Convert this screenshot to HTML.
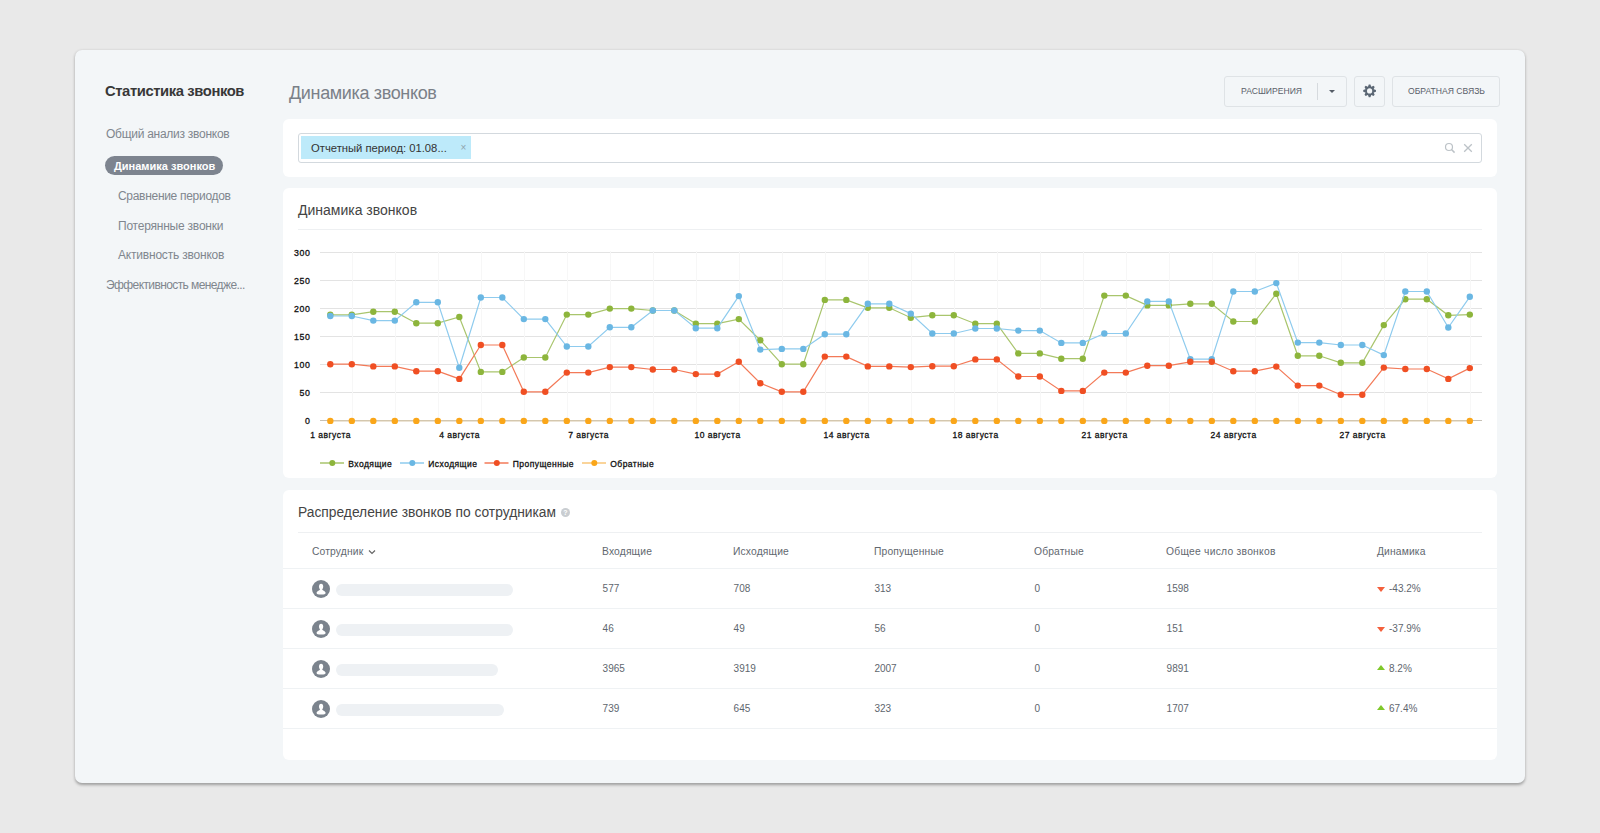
<!DOCTYPE html>
<html><head><meta charset="utf-8">
<style>
*{box-sizing:border-box;margin:0;padding:0}
html,body{width:1600px;height:833px;overflow:hidden;background:#e9e9e9;font-family:"Liberation Sans",sans-serif;color:#333}
.abs{position:absolute}
.win{position:absolute;left:75px;top:50px;width:1450px;height:733px;background:#f3f6f8;border-radius:7px;box-shadow:0 1.5px 3px rgba(0,0,0,.32)}
.t{position:absolute;white-space:nowrap;line-height:1}
.card{position:absolute;background:#fff;border-radius:6px}
.btn{position:absolute;border:1px solid #dfe3e6;border-radius:3px;top:76px;height:31px}
.bt{position:absolute;font-size:8.6px;color:#5a6069;white-space:nowrap;line-height:1}
svg text.ax{font-family:"Liberation Sans",sans-serif;font-size:8.5px;letter-spacing:0.5px;fill:#111;stroke:#111;stroke-width:0.3px}
svg text.ay{font-family:"Liberation Sans",sans-serif;font-size:8.8px;letter-spacing:0.6px;fill:#111;stroke:#111;stroke-width:0.3px}
svg text.lg{font-family:"Liberation Sans",sans-serif;font-size:8.5px;letter-spacing:0.45px;fill:#111;stroke:#111;stroke-width:0.3px}
.th{position:absolute;top:546.8px;font-size:10.3px;letter-spacing:0.15px;color:#62686f;white-space:nowrap;line-height:1}
.td{position:absolute;font-size:10px;color:#60666e;white-space:nowrap;line-height:1}
.rb{position:absolute;left:283px;width:1214px;height:1px;background:#eff2f4}
.av{position:absolute;left:312.4px;width:18px;height:18px;border-radius:50%;background:#7b838d;overflow:hidden}
.nb{position:absolute;left:336px;height:12px;border-radius:6px;background:#eef1f4}
</style></head><body>
<div class="win"></div>

<!-- sidebar -->
<div class="t" style="left:105px;top:83.9px;font-size:14.8px;letter-spacing:-0.41px;font-weight:bold;color:#383838">Статистика звонков</div>
<div class="t" style="left:106px;top:127.5px;font-size:12px;letter-spacing:-0.27px;color:#80868e">Общий анализ звонков</div>
<div class="abs" style="left:105px;top:156px;width:118px;height:19px;border-radius:10px;background:#7d848f"></div>
<div class="t" style="left:114px;top:161.2px;font-size:11px;font-weight:bold;color:#fff">Динамика звонков</div>
<div class="t" style="left:118px;top:189.9px;font-size:12px;letter-spacing:-0.3px;color:#80868e">Сравнение периодов</div>
<div class="t" style="left:118px;top:219.9px;font-size:12px;letter-spacing:-0.22px;color:#80868e">Потерянные звонки</div>
<div class="t" style="left:118px;top:248.6px;font-size:12px;letter-spacing:-0.2px;color:#80868e">Активность звонков</div>
<div class="t" style="left:106px;top:278.6px;font-size:12px;letter-spacing:-0.6px;color:#80868e">Эффективность менедже...</div>

<!-- page title -->
<div class="t" style="left:289px;top:83.5px;font-size:18px;letter-spacing:-0.35px;color:#7a8088">Динамика звонков</div>

<!-- buttons -->
<div class="btn" style="left:1224px;width:123px"></div>
<div class="abs" style="left:1317px;top:83px;width:1px;height:17px;background:#d6dade"></div>
<div class="bt" style="left:1241px;top:87px">РАСШИРЕНИЯ</div>
<div class="abs" style="left:1329px;top:90px;width:0;height:0;border-left:3px solid transparent;border-right:3px solid transparent;border-top:3px solid #555c66"></div>
<div class="btn" style="left:1354px;width:31px"></div>
<svg class="abs" style="left:1363px;top:84px" width="14" height="14" viewBox="0 0 14 14"><path d="M4.97,2.70 L5.77,0.55 L7.43,0.55 L8.23,2.70 L8.27,2.72 L8.32,2.74 L8.37,2.76 L8.42,2.78 L10.50,1.83 L11.67,3.00 L10.72,5.08 L10.74,5.13 L10.76,5.18 L10.78,5.23 L10.80,5.27 L12.95,6.07 L12.95,7.73 L10.80,8.53 L10.78,8.57 L10.76,8.62 L10.74,8.67 L10.72,8.72 L11.67,10.80 L10.50,11.97 L8.42,11.02 L8.37,11.04 L8.32,11.06 L8.27,11.08 L8.23,11.10 L7.43,13.25 L5.77,13.25 L4.97,11.10 L4.93,11.08 L4.88,11.06 L4.83,11.04 L4.78,11.02 L2.70,11.97 L1.53,10.80 L2.48,8.72 L2.46,8.67 L2.44,8.62 L2.42,8.57 L2.40,8.53 L0.25,7.73 L0.25,6.07 L2.40,5.27 L2.42,5.23 L2.44,5.18 L2.46,5.13 L2.48,5.08 L1.53,3.00 L2.70,1.83 L4.78,2.78 L4.83,2.76 L4.88,2.74 L4.93,2.72Z M9.2,6.9 A2.6,2.6 0 1,0 3.9999999999999996,6.9 A2.6,2.6 0 1,0 9.2,6.9Z" fill="#5b6774" fill-rule="evenodd"/></svg>
<div class="btn" style="left:1392px;width:108px"></div>
<div class="bt" style="left:1408px;top:87px">ОБРАТНАЯ СВЯЗЬ</div>

<!-- filter card -->
<div class="card" style="left:283px;top:119px;width:1214px;height:58px"></div>
<div class="abs" style="left:298px;top:133px;width:1184px;height:30px;border:1px solid #d3d9de;border-radius:3px;background:#fff"></div>
<div class="abs" style="left:301px;top:136px;width:170px;height:23px;background:#bdeafa"></div>
<div class="t" style="left:311px;top:142.5px;font-size:11.25px;color:#333">Отчетный период: 01.08...</div>
<div class="t" style="left:460.5px;top:143px;font-size:10px;color:#8fa4ad">×</div>
<svg class="abs" style="left:1444px;top:142px" width="12" height="12" viewBox="0 0 12 12"><circle cx="5" cy="5" r="3.5" fill="none" stroke="#bcc2c7" stroke-width="1.2"/><line x1="7.5" y1="7.5" x2="10.6" y2="10.6" stroke="#bcc2c7" stroke-width="1.5"/></svg>
<svg class="abs" style="left:1462.5px;top:143px" width="10" height="10" viewBox="0 0 10 10"><path d="M1.2 1.2L8.8 8.8M8.8 1.2L1.2 8.8" stroke="#bcc2c7" stroke-width="1.3"/></svg>

<!-- chart card -->
<div class="card" style="left:283px;top:188px;width:1214px;height:290px"></div>
<div class="t" style="left:298px;top:203.2px;font-size:14px;color:#444">Динамика звонков</div>
<div class="abs" style="left:298px;top:229px;width:1184px;height:1px;background:#eef0f2"></div>
<svg class="abs" style="left:0;top:0" width="1600" height="833">
<line x1="320" y1="420.5" x2="1482" y2="420.5" stroke="#c7c1b5" stroke-width="1"/>
<text x="310.5" y="424.0" text-anchor="end" class="ay">0</text>
<line x1="320" y1="392.5" x2="1482" y2="392.5" stroke="#e3e3e3" stroke-width="1"/>
<text x="310.5" y="396.0" text-anchor="end" class="ay">50</text>
<line x1="320" y1="364.5" x2="1482" y2="364.5" stroke="#e3e3e3" stroke-width="1"/>
<text x="310.5" y="368.0" text-anchor="end" class="ay">100</text>
<line x1="320" y1="336.5" x2="1482" y2="336.5" stroke="#e3e3e3" stroke-width="1"/>
<text x="310.5" y="340.0" text-anchor="end" class="ay">150</text>
<line x1="320" y1="308.5" x2="1482" y2="308.5" stroke="#e3e3e3" stroke-width="1"/>
<text x="310.5" y="312.0" text-anchor="end" class="ay">200</text>
<line x1="320" y1="280.5" x2="1482" y2="280.5" stroke="#e3e3e3" stroke-width="1"/>
<text x="310.5" y="284.0" text-anchor="end" class="ay">250</text>
<line x1="320" y1="252.5" x2="1482" y2="252.5" stroke="#e3e3e3" stroke-width="1"/>
<text x="310.5" y="256.0" text-anchor="end" class="ay">300</text>
<line x1="352.5" y1="251" x2="352.5" y2="420" stroke="#f7f7f7" stroke-width="1"/>
<line x1="395.5" y1="251" x2="395.5" y2="420" stroke="#f7f7f7" stroke-width="1"/>
<line x1="438.5" y1="251" x2="438.5" y2="420" stroke="#f7f7f7" stroke-width="1"/>
<line x1="481.5" y1="251" x2="481.5" y2="420" stroke="#f7f7f7" stroke-width="1"/>
<line x1="524.5" y1="251" x2="524.5" y2="420" stroke="#f7f7f7" stroke-width="1"/>
<line x1="567.5" y1="251" x2="567.5" y2="420" stroke="#f7f7f7" stroke-width="1"/>
<line x1="610.5" y1="251" x2="610.5" y2="420" stroke="#f7f7f7" stroke-width="1"/>
<line x1="653.5" y1="251" x2="653.5" y2="420" stroke="#f7f7f7" stroke-width="1"/>
<line x1="696.5" y1="251" x2="696.5" y2="420" stroke="#f7f7f7" stroke-width="1"/>
<line x1="739.5" y1="251" x2="739.5" y2="420" stroke="#f7f7f7" stroke-width="1"/>
<line x1="782.5" y1="251" x2="782.5" y2="420" stroke="#f7f7f7" stroke-width="1"/>
<line x1="825.5" y1="251" x2="825.5" y2="420" stroke="#f7f7f7" stroke-width="1"/>
<line x1="868.5" y1="251" x2="868.5" y2="420" stroke="#f7f7f7" stroke-width="1"/>
<line x1="911.5" y1="251" x2="911.5" y2="420" stroke="#f7f7f7" stroke-width="1"/>
<line x1="954.5" y1="251" x2="954.5" y2="420" stroke="#f7f7f7" stroke-width="1"/>
<line x1="997.5" y1="251" x2="997.5" y2="420" stroke="#f7f7f7" stroke-width="1"/>
<line x1="1040.5" y1="251" x2="1040.5" y2="420" stroke="#f7f7f7" stroke-width="1"/>
<line x1="1083.5" y1="251" x2="1083.5" y2="420" stroke="#f7f7f7" stroke-width="1"/>
<line x1="1126.5" y1="251" x2="1126.5" y2="420" stroke="#f7f7f7" stroke-width="1"/>
<line x1="1169.5" y1="251" x2="1169.5" y2="420" stroke="#f7f7f7" stroke-width="1"/>
<line x1="1212.5" y1="251" x2="1212.5" y2="420" stroke="#f7f7f7" stroke-width="1"/>
<line x1="1255.5" y1="251" x2="1255.5" y2="420" stroke="#f7f7f7" stroke-width="1"/>
<line x1="1298.5" y1="251" x2="1298.5" y2="420" stroke="#f7f7f7" stroke-width="1"/>
<line x1="1341.5" y1="251" x2="1341.5" y2="420" stroke="#f7f7f7" stroke-width="1"/>
<line x1="1384.5" y1="251" x2="1384.5" y2="420" stroke="#f7f7f7" stroke-width="1"/>
<line x1="1427.5" y1="251" x2="1427.5" y2="420" stroke="#f7f7f7" stroke-width="1"/>
<line x1="1470.5" y1="251" x2="1470.5" y2="420" stroke="#f7f7f7" stroke-width="1"/>
<text x="330.6" y="437.8" text-anchor="middle" class="ax">1 августа</text>
<text x="459.6" y="437.8" text-anchor="middle" class="ax">4 августа</text>
<text x="588.5999999999999" y="437.8" text-anchor="middle" class="ax">7 августа</text>
<text x="717.5999999999999" y="437.8" text-anchor="middle" class="ax">10 августа</text>
<text x="846.5999999999999" y="437.8" text-anchor="middle" class="ax">14 августа</text>
<text x="975.5999999999999" y="437.8" text-anchor="middle" class="ax">18 августа</text>
<text x="1104.6" y="437.8" text-anchor="middle" class="ax">21 августа</text>
<text x="1233.6" y="437.8" text-anchor="middle" class="ax">24 августа</text>
<text x="1362.6" y="437.8" text-anchor="middle" class="ax">27 августа</text>
<polyline points="330.3,314.8 351.8,314.8 373.3,311.7 394.8,311.7 416.3,323.2 437.8,323.2 459.3,317.0 480.8,371.9 502.3,371.9 523.8,357.5 545.3,357.5 566.8,314.6 588.3,314.6 609.8,308.6 631.3,308.6 652.8,310.5 674.3,310.5 695.8,323.7 717.3,323.7 738.8,319.1 760.3,340.2 781.8,364.2 803.3,364.2 824.8,299.9 846.3,299.9 867.8,307.8 889.3,307.8 910.8,317.7 932.3,315.3 953.8,315.3 975.3,323.7 996.8,323.7 1018.3,353.4 1039.8,353.4 1061.3,358.7 1082.8,358.7 1104.3,295.6 1125.8,295.6 1147.3,305.4 1168.8,305.4 1190.3,303.8 1211.8,303.8 1233.3,321.5 1254.8,321.5 1276.3,293.7 1297.8,355.8 1319.3,355.8 1340.8,362.8 1362.3,362.8 1383.8,325.1 1405.3,299.2 1426.8,299.2 1448.3,315.3 1469.8,314.6" fill="none" stroke="#a9c56d" stroke-width="1.2"/>
<circle cx="330.3" cy="314.8" r="3.2" fill="#8db53c"/>
<circle cx="351.8" cy="314.8" r="3.2" fill="#8db53c"/>
<circle cx="373.3" cy="311.7" r="3.2" fill="#8db53c"/>
<circle cx="394.8" cy="311.7" r="3.2" fill="#8db53c"/>
<circle cx="416.3" cy="323.2" r="3.2" fill="#8db53c"/>
<circle cx="437.8" cy="323.2" r="3.2" fill="#8db53c"/>
<circle cx="459.3" cy="317.0" r="3.2" fill="#8db53c"/>
<circle cx="480.8" cy="371.9" r="3.2" fill="#8db53c"/>
<circle cx="502.3" cy="371.9" r="3.2" fill="#8db53c"/>
<circle cx="523.8" cy="357.5" r="3.2" fill="#8db53c"/>
<circle cx="545.3" cy="357.5" r="3.2" fill="#8db53c"/>
<circle cx="566.8" cy="314.6" r="3.2" fill="#8db53c"/>
<circle cx="588.3" cy="314.6" r="3.2" fill="#8db53c"/>
<circle cx="609.8" cy="308.6" r="3.2" fill="#8db53c"/>
<circle cx="631.3" cy="308.6" r="3.2" fill="#8db53c"/>
<circle cx="652.8" cy="310.5" r="3.2" fill="#8db53c"/>
<circle cx="674.3" cy="310.5" r="3.2" fill="#8db53c"/>
<circle cx="695.8" cy="323.7" r="3.2" fill="#8db53c"/>
<circle cx="717.3" cy="323.7" r="3.2" fill="#8db53c"/>
<circle cx="738.8" cy="319.1" r="3.2" fill="#8db53c"/>
<circle cx="760.3" cy="340.2" r="3.2" fill="#8db53c"/>
<circle cx="781.8" cy="364.2" r="3.2" fill="#8db53c"/>
<circle cx="803.3" cy="364.2" r="3.2" fill="#8db53c"/>
<circle cx="824.8" cy="299.9" r="3.2" fill="#8db53c"/>
<circle cx="846.3" cy="299.9" r="3.2" fill="#8db53c"/>
<circle cx="867.8" cy="307.8" r="3.2" fill="#8db53c"/>
<circle cx="889.3" cy="307.8" r="3.2" fill="#8db53c"/>
<circle cx="910.8" cy="317.7" r="3.2" fill="#8db53c"/>
<circle cx="932.3" cy="315.3" r="3.2" fill="#8db53c"/>
<circle cx="953.8" cy="315.3" r="3.2" fill="#8db53c"/>
<circle cx="975.3" cy="323.7" r="3.2" fill="#8db53c"/>
<circle cx="996.8" cy="323.7" r="3.2" fill="#8db53c"/>
<circle cx="1018.3" cy="353.4" r="3.2" fill="#8db53c"/>
<circle cx="1039.8" cy="353.4" r="3.2" fill="#8db53c"/>
<circle cx="1061.3" cy="358.7" r="3.2" fill="#8db53c"/>
<circle cx="1082.8" cy="358.7" r="3.2" fill="#8db53c"/>
<circle cx="1104.3" cy="295.6" r="3.2" fill="#8db53c"/>
<circle cx="1125.8" cy="295.6" r="3.2" fill="#8db53c"/>
<circle cx="1147.3" cy="305.4" r="3.2" fill="#8db53c"/>
<circle cx="1168.8" cy="305.4" r="3.2" fill="#8db53c"/>
<circle cx="1190.3" cy="303.8" r="3.2" fill="#8db53c"/>
<circle cx="1211.8" cy="303.8" r="3.2" fill="#8db53c"/>
<circle cx="1233.3" cy="321.5" r="3.2" fill="#8db53c"/>
<circle cx="1254.8" cy="321.5" r="3.2" fill="#8db53c"/>
<circle cx="1276.3" cy="293.7" r="3.2" fill="#8db53c"/>
<circle cx="1297.8" cy="355.8" r="3.2" fill="#8db53c"/>
<circle cx="1319.3" cy="355.8" r="3.2" fill="#8db53c"/>
<circle cx="1340.8" cy="362.8" r="3.2" fill="#8db53c"/>
<circle cx="1362.3" cy="362.8" r="3.2" fill="#8db53c"/>
<circle cx="1383.8" cy="325.1" r="3.2" fill="#8db53c"/>
<circle cx="1405.3" cy="299.2" r="3.2" fill="#8db53c"/>
<circle cx="1426.8" cy="299.2" r="3.2" fill="#8db53c"/>
<circle cx="1448.3" cy="315.3" r="3.2" fill="#8db53c"/>
<circle cx="1469.8" cy="314.6" r="3.2" fill="#8db53c"/>
<polyline points="330.3,316.0 351.8,316.0 373.3,320.6 394.8,320.6 416.3,302.3 437.8,302.3 459.3,367.8 480.8,297.5 502.3,297.5 523.8,319.1 545.3,319.1 566.8,346.5 588.3,346.5 609.8,327.3 631.3,327.3 652.8,310.5 674.3,310.5 695.8,328.2 717.3,328.2 738.8,296.1 760.3,349.6 781.8,348.9 803.3,348.9 824.8,334.2 846.3,334.2 867.8,303.8 889.3,303.8 910.8,313.6 932.3,333.5 953.8,333.5 975.3,328.5 996.8,328.5 1018.3,330.6 1039.8,330.6 1061.3,342.9 1082.8,342.9 1104.3,333.5 1125.8,333.5 1147.3,301.4 1168.8,301.4 1190.3,359.2 1211.8,359.2 1233.3,291.5 1254.8,291.5 1276.3,283.1 1297.8,342.6 1319.3,342.6 1340.8,345.0 1362.3,345.0 1383.8,355.1 1405.3,291.5 1426.8,291.5 1448.3,327.5 1469.8,296.8" fill="none" stroke="#8ecbee" stroke-width="1.2"/>
<circle cx="330.3" cy="316.0" r="3.2" fill="#6ab7e3"/>
<circle cx="351.8" cy="316.0" r="3.2" fill="#6ab7e3"/>
<circle cx="373.3" cy="320.6" r="3.2" fill="#6ab7e3"/>
<circle cx="394.8" cy="320.6" r="3.2" fill="#6ab7e3"/>
<circle cx="416.3" cy="302.3" r="3.2" fill="#6ab7e3"/>
<circle cx="437.8" cy="302.3" r="3.2" fill="#6ab7e3"/>
<circle cx="459.3" cy="367.8" r="3.2" fill="#6ab7e3"/>
<circle cx="480.8" cy="297.5" r="3.2" fill="#6ab7e3"/>
<circle cx="502.3" cy="297.5" r="3.2" fill="#6ab7e3"/>
<circle cx="523.8" cy="319.1" r="3.2" fill="#6ab7e3"/>
<circle cx="545.3" cy="319.1" r="3.2" fill="#6ab7e3"/>
<circle cx="566.8" cy="346.5" r="3.2" fill="#6ab7e3"/>
<circle cx="588.3" cy="346.5" r="3.2" fill="#6ab7e3"/>
<circle cx="609.8" cy="327.3" r="3.2" fill="#6ab7e3"/>
<circle cx="631.3" cy="327.3" r="3.2" fill="#6ab7e3"/>
<circle cx="652.8" cy="310.5" r="3.2" fill="#6ab7e3"/>
<circle cx="674.3" cy="310.5" r="3.2" fill="#6ab7e3"/>
<circle cx="695.8" cy="328.2" r="3.2" fill="#6ab7e3"/>
<circle cx="717.3" cy="328.2" r="3.2" fill="#6ab7e3"/>
<circle cx="738.8" cy="296.1" r="3.2" fill="#6ab7e3"/>
<circle cx="760.3" cy="349.6" r="3.2" fill="#6ab7e3"/>
<circle cx="781.8" cy="348.9" r="3.2" fill="#6ab7e3"/>
<circle cx="803.3" cy="348.9" r="3.2" fill="#6ab7e3"/>
<circle cx="824.8" cy="334.2" r="3.2" fill="#6ab7e3"/>
<circle cx="846.3" cy="334.2" r="3.2" fill="#6ab7e3"/>
<circle cx="867.8" cy="303.8" r="3.2" fill="#6ab7e3"/>
<circle cx="889.3" cy="303.8" r="3.2" fill="#6ab7e3"/>
<circle cx="910.8" cy="313.6" r="3.2" fill="#6ab7e3"/>
<circle cx="932.3" cy="333.5" r="3.2" fill="#6ab7e3"/>
<circle cx="953.8" cy="333.5" r="3.2" fill="#6ab7e3"/>
<circle cx="975.3" cy="328.5" r="3.2" fill="#6ab7e3"/>
<circle cx="996.8" cy="328.5" r="3.2" fill="#6ab7e3"/>
<circle cx="1018.3" cy="330.6" r="3.2" fill="#6ab7e3"/>
<circle cx="1039.8" cy="330.6" r="3.2" fill="#6ab7e3"/>
<circle cx="1061.3" cy="342.9" r="3.2" fill="#6ab7e3"/>
<circle cx="1082.8" cy="342.9" r="3.2" fill="#6ab7e3"/>
<circle cx="1104.3" cy="333.5" r="3.2" fill="#6ab7e3"/>
<circle cx="1125.8" cy="333.5" r="3.2" fill="#6ab7e3"/>
<circle cx="1147.3" cy="301.4" r="3.2" fill="#6ab7e3"/>
<circle cx="1168.8" cy="301.4" r="3.2" fill="#6ab7e3"/>
<circle cx="1190.3" cy="359.2" r="3.2" fill="#6ab7e3"/>
<circle cx="1211.8" cy="359.2" r="3.2" fill="#6ab7e3"/>
<circle cx="1233.3" cy="291.5" r="3.2" fill="#6ab7e3"/>
<circle cx="1254.8" cy="291.5" r="3.2" fill="#6ab7e3"/>
<circle cx="1276.3" cy="283.1" r="3.2" fill="#6ab7e3"/>
<circle cx="1297.8" cy="342.6" r="3.2" fill="#6ab7e3"/>
<circle cx="1319.3" cy="342.6" r="3.2" fill="#6ab7e3"/>
<circle cx="1340.8" cy="345.0" r="3.2" fill="#6ab7e3"/>
<circle cx="1362.3" cy="345.0" r="3.2" fill="#6ab7e3"/>
<circle cx="1383.8" cy="355.1" r="3.2" fill="#6ab7e3"/>
<circle cx="1405.3" cy="291.5" r="3.2" fill="#6ab7e3"/>
<circle cx="1426.8" cy="291.5" r="3.2" fill="#6ab7e3"/>
<circle cx="1448.3" cy="327.5" r="3.2" fill="#6ab7e3"/>
<circle cx="1469.8" cy="296.8" r="3.2" fill="#6ab7e3"/>
<polyline points="330.3,364.2 351.8,364.2 373.3,366.4 394.8,366.4 416.3,371.2 437.8,371.2 459.3,378.9 480.8,345.0 502.3,345.0 523.8,391.8 545.3,391.8 566.8,372.6 588.3,372.6 609.8,367.1 631.3,367.1 652.8,369.5 674.3,369.5 695.8,374.1 717.3,374.1 738.8,361.8 760.3,383.2 781.8,391.8 803.3,391.8 824.8,356.6 846.3,356.6 867.8,366.4 889.3,366.4 910.8,367.1 932.3,366.2 953.8,366.2 975.3,359.4 996.8,359.4 1018.3,376.5 1039.8,376.5 1061.3,390.9 1082.8,390.9 1104.3,372.6 1125.8,372.6 1147.3,365.7 1168.8,365.7 1190.3,361.8 1211.8,361.8 1233.3,371.2 1254.8,371.2 1276.3,366.6 1297.8,385.6 1319.3,385.6 1340.8,394.7 1362.3,394.7 1383.8,367.6 1405.3,369.0 1426.8,369.0 1448.3,378.9 1469.8,368.1" fill="none" stroke="#f37a58" stroke-width="1.2"/>
<circle cx="330.3" cy="364.2" r="3.2" fill="#f04f23"/>
<circle cx="351.8" cy="364.2" r="3.2" fill="#f04f23"/>
<circle cx="373.3" cy="366.4" r="3.2" fill="#f04f23"/>
<circle cx="394.8" cy="366.4" r="3.2" fill="#f04f23"/>
<circle cx="416.3" cy="371.2" r="3.2" fill="#f04f23"/>
<circle cx="437.8" cy="371.2" r="3.2" fill="#f04f23"/>
<circle cx="459.3" cy="378.9" r="3.2" fill="#f04f23"/>
<circle cx="480.8" cy="345.0" r="3.2" fill="#f04f23"/>
<circle cx="502.3" cy="345.0" r="3.2" fill="#f04f23"/>
<circle cx="523.8" cy="391.8" r="3.2" fill="#f04f23"/>
<circle cx="545.3" cy="391.8" r="3.2" fill="#f04f23"/>
<circle cx="566.8" cy="372.6" r="3.2" fill="#f04f23"/>
<circle cx="588.3" cy="372.6" r="3.2" fill="#f04f23"/>
<circle cx="609.8" cy="367.1" r="3.2" fill="#f04f23"/>
<circle cx="631.3" cy="367.1" r="3.2" fill="#f04f23"/>
<circle cx="652.8" cy="369.5" r="3.2" fill="#f04f23"/>
<circle cx="674.3" cy="369.5" r="3.2" fill="#f04f23"/>
<circle cx="695.8" cy="374.1" r="3.2" fill="#f04f23"/>
<circle cx="717.3" cy="374.1" r="3.2" fill="#f04f23"/>
<circle cx="738.8" cy="361.8" r="3.2" fill="#f04f23"/>
<circle cx="760.3" cy="383.2" r="3.2" fill="#f04f23"/>
<circle cx="781.8" cy="391.8" r="3.2" fill="#f04f23"/>
<circle cx="803.3" cy="391.8" r="3.2" fill="#f04f23"/>
<circle cx="824.8" cy="356.6" r="3.2" fill="#f04f23"/>
<circle cx="846.3" cy="356.6" r="3.2" fill="#f04f23"/>
<circle cx="867.8" cy="366.4" r="3.2" fill="#f04f23"/>
<circle cx="889.3" cy="366.4" r="3.2" fill="#f04f23"/>
<circle cx="910.8" cy="367.1" r="3.2" fill="#f04f23"/>
<circle cx="932.3" cy="366.2" r="3.2" fill="#f04f23"/>
<circle cx="953.8" cy="366.2" r="3.2" fill="#f04f23"/>
<circle cx="975.3" cy="359.4" r="3.2" fill="#f04f23"/>
<circle cx="996.8" cy="359.4" r="3.2" fill="#f04f23"/>
<circle cx="1018.3" cy="376.5" r="3.2" fill="#f04f23"/>
<circle cx="1039.8" cy="376.5" r="3.2" fill="#f04f23"/>
<circle cx="1061.3" cy="390.9" r="3.2" fill="#f04f23"/>
<circle cx="1082.8" cy="390.9" r="3.2" fill="#f04f23"/>
<circle cx="1104.3" cy="372.6" r="3.2" fill="#f04f23"/>
<circle cx="1125.8" cy="372.6" r="3.2" fill="#f04f23"/>
<circle cx="1147.3" cy="365.7" r="3.2" fill="#f04f23"/>
<circle cx="1168.8" cy="365.7" r="3.2" fill="#f04f23"/>
<circle cx="1190.3" cy="361.8" r="3.2" fill="#f04f23"/>
<circle cx="1211.8" cy="361.8" r="3.2" fill="#f04f23"/>
<circle cx="1233.3" cy="371.2" r="3.2" fill="#f04f23"/>
<circle cx="1254.8" cy="371.2" r="3.2" fill="#f04f23"/>
<circle cx="1276.3" cy="366.6" r="3.2" fill="#f04f23"/>
<circle cx="1297.8" cy="385.6" r="3.2" fill="#f04f23"/>
<circle cx="1319.3" cy="385.6" r="3.2" fill="#f04f23"/>
<circle cx="1340.8" cy="394.7" r="3.2" fill="#f04f23"/>
<circle cx="1362.3" cy="394.7" r="3.2" fill="#f04f23"/>
<circle cx="1383.8" cy="367.6" r="3.2" fill="#f04f23"/>
<circle cx="1405.3" cy="369.0" r="3.2" fill="#f04f23"/>
<circle cx="1426.8" cy="369.0" r="3.2" fill="#f04f23"/>
<circle cx="1448.3" cy="378.9" r="3.2" fill="#f04f23"/>
<circle cx="1469.8" cy="368.1" r="3.2" fill="#f04f23"/>
<polyline points="330.3,420.9 351.8,420.9 373.3,420.9 394.8,420.9 416.3,420.9 437.8,420.9 459.3,420.9 480.8,420.9 502.3,420.9 523.8,420.9 545.3,420.9 566.8,420.9 588.3,420.9 609.8,420.9 631.3,420.9 652.8,420.9 674.3,420.9 695.8,420.9 717.3,420.9 738.8,420.9 760.3,420.9 781.8,420.9 803.3,420.9 824.8,420.9 846.3,420.9 867.8,420.9 889.3,420.9 910.8,420.9 932.3,420.9 953.8,420.9 975.3,420.9 996.8,420.9 1018.3,420.9 1039.8,420.9 1061.3,420.9 1082.8,420.9 1104.3,420.9 1125.8,420.9 1147.3,420.9 1168.8,420.9 1190.3,420.9 1211.8,420.9 1233.3,420.9 1254.8,420.9 1276.3,420.9 1297.8,420.9 1319.3,420.9 1340.8,420.9 1362.3,420.9 1383.8,420.9 1405.3,420.9 1426.8,420.9 1448.3,420.9 1469.8,420.9" fill="none" stroke="#d9c9ac" stroke-width="1.2"/>
<circle cx="330.3" cy="420.9" r="3.2" fill="#faa619"/>
<circle cx="351.8" cy="420.9" r="3.2" fill="#faa619"/>
<circle cx="373.3" cy="420.9" r="3.2" fill="#faa619"/>
<circle cx="394.8" cy="420.9" r="3.2" fill="#faa619"/>
<circle cx="416.3" cy="420.9" r="3.2" fill="#faa619"/>
<circle cx="437.8" cy="420.9" r="3.2" fill="#faa619"/>
<circle cx="459.3" cy="420.9" r="3.2" fill="#faa619"/>
<circle cx="480.8" cy="420.9" r="3.2" fill="#faa619"/>
<circle cx="502.3" cy="420.9" r="3.2" fill="#faa619"/>
<circle cx="523.8" cy="420.9" r="3.2" fill="#faa619"/>
<circle cx="545.3" cy="420.9" r="3.2" fill="#faa619"/>
<circle cx="566.8" cy="420.9" r="3.2" fill="#faa619"/>
<circle cx="588.3" cy="420.9" r="3.2" fill="#faa619"/>
<circle cx="609.8" cy="420.9" r="3.2" fill="#faa619"/>
<circle cx="631.3" cy="420.9" r="3.2" fill="#faa619"/>
<circle cx="652.8" cy="420.9" r="3.2" fill="#faa619"/>
<circle cx="674.3" cy="420.9" r="3.2" fill="#faa619"/>
<circle cx="695.8" cy="420.9" r="3.2" fill="#faa619"/>
<circle cx="717.3" cy="420.9" r="3.2" fill="#faa619"/>
<circle cx="738.8" cy="420.9" r="3.2" fill="#faa619"/>
<circle cx="760.3" cy="420.9" r="3.2" fill="#faa619"/>
<circle cx="781.8" cy="420.9" r="3.2" fill="#faa619"/>
<circle cx="803.3" cy="420.9" r="3.2" fill="#faa619"/>
<circle cx="824.8" cy="420.9" r="3.2" fill="#faa619"/>
<circle cx="846.3" cy="420.9" r="3.2" fill="#faa619"/>
<circle cx="867.8" cy="420.9" r="3.2" fill="#faa619"/>
<circle cx="889.3" cy="420.9" r="3.2" fill="#faa619"/>
<circle cx="910.8" cy="420.9" r="3.2" fill="#faa619"/>
<circle cx="932.3" cy="420.9" r="3.2" fill="#faa619"/>
<circle cx="953.8" cy="420.9" r="3.2" fill="#faa619"/>
<circle cx="975.3" cy="420.9" r="3.2" fill="#faa619"/>
<circle cx="996.8" cy="420.9" r="3.2" fill="#faa619"/>
<circle cx="1018.3" cy="420.9" r="3.2" fill="#faa619"/>
<circle cx="1039.8" cy="420.9" r="3.2" fill="#faa619"/>
<circle cx="1061.3" cy="420.9" r="3.2" fill="#faa619"/>
<circle cx="1082.8" cy="420.9" r="3.2" fill="#faa619"/>
<circle cx="1104.3" cy="420.9" r="3.2" fill="#faa619"/>
<circle cx="1125.8" cy="420.9" r="3.2" fill="#faa619"/>
<circle cx="1147.3" cy="420.9" r="3.2" fill="#faa619"/>
<circle cx="1168.8" cy="420.9" r="3.2" fill="#faa619"/>
<circle cx="1190.3" cy="420.9" r="3.2" fill="#faa619"/>
<circle cx="1211.8" cy="420.9" r="3.2" fill="#faa619"/>
<circle cx="1233.3" cy="420.9" r="3.2" fill="#faa619"/>
<circle cx="1254.8" cy="420.9" r="3.2" fill="#faa619"/>
<circle cx="1276.3" cy="420.9" r="3.2" fill="#faa619"/>
<circle cx="1297.8" cy="420.9" r="3.2" fill="#faa619"/>
<circle cx="1319.3" cy="420.9" r="3.2" fill="#faa619"/>
<circle cx="1340.8" cy="420.9" r="3.2" fill="#faa619"/>
<circle cx="1362.3" cy="420.9" r="3.2" fill="#faa619"/>
<circle cx="1383.8" cy="420.9" r="3.2" fill="#faa619"/>
<circle cx="1405.3" cy="420.9" r="3.2" fill="#faa619"/>
<circle cx="1426.8" cy="420.9" r="3.2" fill="#faa619"/>
<circle cx="1448.3" cy="420.9" r="3.2" fill="#faa619"/>
<circle cx="1469.8" cy="420.9" r="3.2" fill="#faa619"/>
<line x1="320" y1="463" x2="344" y2="463" stroke="#a9c56d" stroke-width="1.5"/>
<circle cx="332.3" cy="463" r="3" fill="#8db53c"/>
<text x="348.3" y="467" class="lg">Входящие</text>
<line x1="400" y1="463" x2="424" y2="463" stroke="#8ecbee" stroke-width="1.5"/>
<circle cx="412.3" cy="463" r="3" fill="#6ab7e3"/>
<text x="428.3" y="467" class="lg">Исходящие</text>
<line x1="484.5" y1="463" x2="508.5" y2="463" stroke="#f37a58" stroke-width="1.5"/>
<circle cx="496.8" cy="463" r="3" fill="#f04f23"/>
<text x="512.8" y="467" class="lg">Пропущенные</text>
<line x1="582" y1="463" x2="606" y2="463" stroke="#f8c678" stroke-width="1.5"/>
<circle cx="594.3" cy="463" r="3" fill="#faa619"/>
<text x="610.3" y="467" class="lg">Обратные</text>
</svg>

<!-- table card -->
<div class="card" style="left:283px;top:490px;width:1214px;height:270px"></div>
<div class="t" style="left:298px;top:505.6px;font-size:13.8px;color:#444">Распределение звонков по сотрудникам</div>
<div class="abs" style="left:561px;top:508px;width:9px;height:9px;border-radius:50%;background:#c9cdd1"></div>
<div class="t" style="left:563.3px;top:509px;font-size:7px;font-weight:bold;color:#fff">?</div>
<div class="abs" style="left:298px;top:532px;width:1184px;height:1px;background:#eef0f2"></div>

<div class="th" style="left:312px">Сотрудник</div>
<svg class="abs" style="left:368px;top:549px" width="8" height="6" viewBox="0 0 8 6"><path d="M1 1.5L4 4.5L7 1.5" fill="none" stroke="#666" stroke-width="1.2"/></svg>
<div class="th" style="left:602px">Входящие</div>
<div class="th" style="left:733px">Исходящие</div>
<div class="th" style="left:874px">Пропущенные</div>
<div class="th" style="left:1034px">Обратные</div>
<div class="th" style="left:1166px;letter-spacing:0.25px">Общее число звонков</div>
<div class="th" style="left:1377px">Динамика</div>

<div class="rb" style="top:568px"></div>
<div class="av" style="top:579.9px"><svg width="18" height="18" viewBox="0 0 18 18"><ellipse cx="9.1" cy="6.6" rx="2.1" ry="2.9" fill="#fff"/><path d="M8.1 9.0 C8.1 10.8 4.6 10.9 4.6 12.9 C4.6 14.0 6 14.4 9.1 14.4 C12.2 14.4 13.6 14.0 13.6 12.9 C13.6 10.9 10.1 10.8 10.1 9.0 Z" fill="#fff"/></svg></div>
<div class="nb" style="top:583.7px;width:177px"></div>
<div class="td" style="left:602.6px;top:584px">577</div>
<div class="td" style="left:733.6px;top:584px">708</div>
<div class="td" style="left:874.4px;top:584px">313</div>
<div class="td" style="left:1034.6px;top:584px">0</div>
<div class="td" style="left:1166.6px;top:584px">1598</div>
<div class="abs" style="left:1376.5px;top:586.6px;width:0;height:0;border-left:4.4px solid transparent;border-right:4.4px solid transparent;border-top:5px solid #f4603c"></div>
<div class="td" style="left:1389px;top:584px">-43.2%</div>
<div class="rb" style="top:608px"></div>
<div class="av" style="top:619.9px"><svg width="18" height="18" viewBox="0 0 18 18"><ellipse cx="9.1" cy="6.6" rx="2.1" ry="2.9" fill="#fff"/><path d="M8.1 9.0 C8.1 10.8 4.6 10.9 4.6 12.9 C4.6 14.0 6 14.4 9.1 14.4 C12.2 14.4 13.6 14.0 13.6 12.9 C13.6 10.9 10.1 10.8 10.1 9.0 Z" fill="#fff"/></svg></div>
<div class="nb" style="top:623.7px;width:177px"></div>
<div class="td" style="left:602.6px;top:624px">46</div>
<div class="td" style="left:733.6px;top:624px">49</div>
<div class="td" style="left:874.4px;top:624px">56</div>
<div class="td" style="left:1034.6px;top:624px">0</div>
<div class="td" style="left:1166.6px;top:624px">151</div>
<div class="abs" style="left:1376.5px;top:626.6px;width:0;height:0;border-left:4.4px solid transparent;border-right:4.4px solid transparent;border-top:5px solid #f4603c"></div>
<div class="td" style="left:1389px;top:624px">-37.9%</div>
<div class="rb" style="top:648px"></div>
<div class="av" style="top:659.9px"><svg width="18" height="18" viewBox="0 0 18 18"><ellipse cx="9.1" cy="6.6" rx="2.1" ry="2.9" fill="#fff"/><path d="M8.1 9.0 C8.1 10.8 4.6 10.9 4.6 12.9 C4.6 14.0 6 14.4 9.1 14.4 C12.2 14.4 13.6 14.0 13.6 12.9 C13.6 10.9 10.1 10.8 10.1 9.0 Z" fill="#fff"/></svg></div>
<div class="nb" style="top:663.7px;width:162px"></div>
<div class="td" style="left:602.6px;top:664px">3965</div>
<div class="td" style="left:733.6px;top:664px">3919</div>
<div class="td" style="left:874.4px;top:664px">2007</div>
<div class="td" style="left:1034.6px;top:664px">0</div>
<div class="td" style="left:1166.6px;top:664px">9891</div>
<div class="abs" style="left:1376.5px;top:665.4px;width:0;height:0;border-left:4.4px solid transparent;border-right:4.4px solid transparent;border-bottom:5px solid #7fc82a"></div>
<div class="td" style="left:1389px;top:664px">8.2%</div>
<div class="rb" style="top:688px"></div>
<div class="av" style="top:699.9px"><svg width="18" height="18" viewBox="0 0 18 18"><ellipse cx="9.1" cy="6.6" rx="2.1" ry="2.9" fill="#fff"/><path d="M8.1 9.0 C8.1 10.8 4.6 10.9 4.6 12.9 C4.6 14.0 6 14.4 9.1 14.4 C12.2 14.4 13.6 14.0 13.6 12.9 C13.6 10.9 10.1 10.8 10.1 9.0 Z" fill="#fff"/></svg></div>
<div class="nb" style="top:703.7px;width:168px"></div>
<div class="td" style="left:602.6px;top:704px">739</div>
<div class="td" style="left:733.6px;top:704px">645</div>
<div class="td" style="left:874.4px;top:704px">323</div>
<div class="td" style="left:1034.6px;top:704px">0</div>
<div class="td" style="left:1166.6px;top:704px">1707</div>
<div class="abs" style="left:1376.5px;top:705.4px;width:0;height:0;border-left:4.4px solid transparent;border-right:4.4px solid transparent;border-bottom:5px solid #7fc82a"></div>
<div class="td" style="left:1389px;top:704px">67.4%</div>
<div class="rb" style="top:728px"></div>
</body></html>
